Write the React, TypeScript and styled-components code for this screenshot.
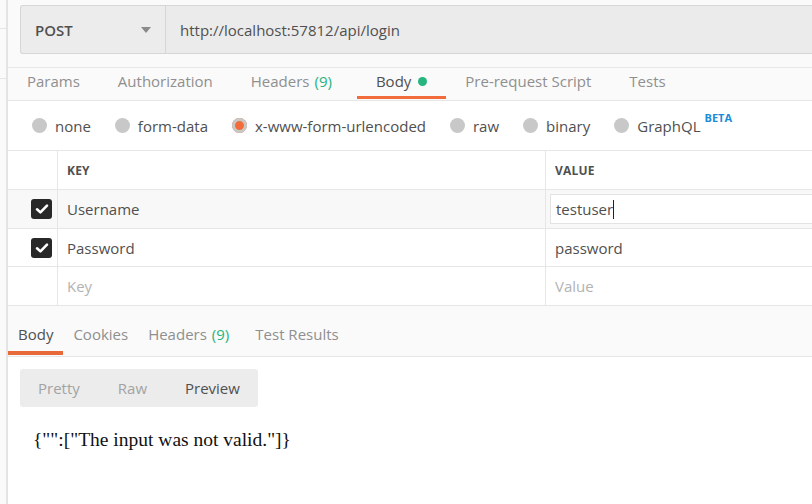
import styled, { createGlobalStyle } from 'styled-components';

const GlobalStyle = createGlobalStyle`
	html, body {
		margin: 0;
		padding: 0;
		background: #fff;
	}
	body {
		font-family: 'Open Sans', 'Liberation Sans', sans-serif;
		color: #505050;
	}
	* {
		box-sizing: border-box;
	}
`;

const requestTabs = [
	{ label: 'Params' },
	{ label: 'Authorization' },
	{ label: 'Headers', count: 9 },
	{ label: 'Body', active: true, dot: true },
	{ label: 'Pre-request Script' },
	{ label: 'Tests' },
];

const bodyModes = [
	{ label: 'none' },
	{ label: 'form-data' },
	{ label: 'x-www-form-urlencoded', checked: true },
	{ label: 'raw' },
	{ label: 'binary' },
	{ label: 'GraphQL', beta: true },
];

const params = [
	{ key: 'Username', value: 'testuser', editing: true },
	{ key: 'Password', value: 'password', short: true },
];

const responseTabs = [
	{ label: 'Body', active: true },
	{ label: 'Cookies' },
	{ label: 'Headers', count: 9 },
	{ label: 'Test Results' },
];

const CheckIcon = () => (
	<svg width="14" height="12" viewBox="0 0 14 12">
		<path d="M2 6.3 L5.4 9.4 L12 2.6" fill="none" stroke="#fff" strokeWidth="2.6" strokeLinecap="round" strokeLinejoin="round" />
	</svg>
);

export default function App() {
	return (
		<>
			<GlobalStyle />
			<Page>
				<Sidebar>
					<SideItem />
					<SideItem />
				</Sidebar>
				<Main>
					<UrlBar>
						<MethodSelect>
							<span>POST</span>
							<Caret />
						</MethodSelect>
						<UrlInput>http://localhost:57812/api/login</UrlInput>
					</UrlBar>

					<TabRow>
						{requestTabs.map((t) => (
							<Tab key={t.label} active={t.active}>
								{t.label}
								{t.count !== undefined && <Count>({t.count})</Count>}
								{t.dot && <Dot />}
							</Tab>
						))}
					</TabRow>

					<ModeRow>
						{bodyModes.map((m) => (
							<Mode key={m.label}>
								<Radio checked={m.checked} />
								<span>{m.label}</span>
								{m.beta && <Beta>BETA</Beta>}
							</Mode>
						))}
					</ModeRow>

					<Table>
						<HeadRow>
							<CheckCell />
							<KeyCell><HeadLabel>KEY</HeadLabel></KeyCell>
							<ValueCell><HeadLabel>VALUE</HeadLabel></ValueCell>
						</HeadRow>
						{params.map((p) => (
							<Row key={p.key} hovered={p.editing} short={p.short}>
								<CheckCell>
									<Checkbox><CheckIcon /></Checkbox>
								</CheckCell>
								<KeyCell>{p.key}</KeyCell>
								<ValueCell>
									{p.editing ? (
										<EditBox>{p.value}<Cursor /></EditBox>
									) : (
										p.value
									)}
								</ValueCell>
							</Row>
						))}
						<Row>
							<CheckCell />
							<KeyCell><Placeholder>Key</Placeholder></KeyCell>
							<ValueCell><Placeholder>Value</Placeholder></ValueCell>
						</Row>
					</Table>

					<ResponseTabs>
						{responseTabs.map((t) => (
							<ResponseTab key={t.label} active={t.active}>
								{t.label}
								{t.count !== undefined && <Count>({t.count})</Count>}
							</ResponseTab>
						))}
					</ResponseTabs>

					<ResponseBody>
						<ViewToggle>
							<ViewOption>Pretty</ViewOption>
							<ViewOption>Raw</ViewOption>
							<ViewOption active>Preview</ViewOption>
						</ViewToggle>
						<Preview>{'{"":["The input was not valid."]}'}</Preview>
					</ResponseBody>
				</Main>
			</Page>
		</>
	);
}

const Page = styled.div`
	display: flex;
	width: 812px;
	height: 504px;
	overflow: hidden;
`;

const Sidebar = styled.div`
	width: 8px;
	flex-shrink: 0;
	background: #fafafa;
	border-right: 2px solid #e4e4e4;
`;

const SideItem = styled.div`
	height: 29px;
	border-bottom: 1px solid #e6e6e6;
	& + & {
		height: 50px;
	}
`;

const Main = styled.div`
	flex: 1;
	min-width: 0;
	display: flex;
	flex-direction: column;
`;

const UrlBar = styled.div`
	display: flex;
	height: 67px;
	padding: 5px 0 13px 12px;
	background: #fafafa;

	& > * {
		height: 49px;
	}
`;

const MethodSelect = styled.div`
	width: 145px;
	display: flex;
	align-items: center;
	justify-content: space-between;
	padding: 0 14px 0 14px;
	background: #ececec;
	border: 1px solid #d6d6d6;
	border-right: none;
	border-radius: 3px 0 0 3px;
	font-size: 15px;
	font-weight: 600;
	color: #505050;
`;

const Caret = styled.span`
	width: 0;
	height: 0;
	border-left: 5px solid transparent;
	border-right: 5px solid transparent;
	border-top: 6px solid #8a8a8a;
`;

const UrlInput = styled.div`
	flex: 1;
	display: flex;
	align-items: center;
	padding-left: 14px;
	background: #ebebeb;
	border: 1px solid #d6d6d6;
	border-right: none;
	font-size: 15px;
	color: #505050;
`;

const TabRow = styled.div`
	display: flex;
	height: 34px;
	background: #fafafa;
	border-top: 1px solid #e8e8e8;
	border-bottom: 1px solid #e6e6e6;
`;

const Tab = styled.div<{ active?: boolean }>`
	display: flex;
	align-items: center;
	padding: 0 19px 5px;
	margin-bottom: 1px;
	font-size: 15px;
	color: ${({ active }) => (active ? '#505050' : '#8f8f8f')};
	box-shadow: ${({ active }) => (active ? 'inset 0 -3px 0 #f26b3a' : 'none')};
`;

const Count = styled.span`
	color: #26b47f;
	margin-left: 5px;
	margin-right: 6px;
`;

const Dot = styled.span`
	width: 9px;
	height: 9px;
	border-radius: 50%;
	background: #26b47f;
	margin-left: 7px;
`;

const ModeRow = styled.div`
	display: flex;
	align-items: center;
	height: 50px;
	padding-left: 24px;
	border-bottom: 1px solid #e6e6e6;
	background: #fff;
`;

const Mode = styled.div`
	display: flex;
	align-items: center;
	margin-right: 24px;
	font-size: 15px;
	color: #505050;
`;

const Radio = styled.span<{ checked?: boolean }>`
	width: 15px;
	height: 15px;
	border-radius: 50%;
	background: ${({ checked }) => (checked ? '#f26b3a' : '#c8c8c8')};
	box-shadow: ${({ checked }) => (checked ? 'inset 0 0 0 3px #c8c8c8' : 'none')};
	margin-right: 8px;
`;

const Beta = styled.span`
	font-size: 11px;
	font-weight: 700;
	color: #1a8cd8;
	margin-left: 4px;
	align-self: flex-start;
	margin-top: -6px;
`;

const Table = styled.div`
	display: flex;
	flex-direction: column;
	border-bottom: 1px solid #e6e6e6;
`;

const Row = styled.div<{ hovered?: boolean; short?: boolean }>`
	display: flex;
	height: ${({ short }) => (short ? '38px' : '39px')};
	border-top: 1px solid #e6e6e6;
	background: ${({ hovered }) => (hovered ? '#f8f8f8' : '#fff')};
	font-size: 15px;
	color: #505050;
`;

const HeadRow = styled(Row)`
	height: 38px;
	border-top: none;
`;

const CheckCell = styled.div`
	width: 49px;
	flex-shrink: 0;
	display: flex;
	align-items: center;
	padding-left: 23px;
`;

const KeyCell = styled.div`
	width: 488px;
	flex-shrink: 0;
	display: flex;
	align-items: center;
	padding-left: 9px;
	border-left: 1px solid #e6e6e6;
`;

const ValueCell = styled.div`
	flex: 1;
	display: flex;
	align-items: center;
	padding-left: 9px;
	border-left: 1px solid #e6e6e6;
`;

const HeadLabel = styled.span`
	font-size: 12px;
	font-weight: 700;
	color: #505050;
	letter-spacing: 0.2px;
`;

const Checkbox = styled.span`
	width: 21px;
	height: 20px;
	border-radius: 3px;
	background: #282828;
	display: flex;
	align-items: center;
	justify-content: center;
`;

const EditBox = styled.div`
	flex: 1;
	height: 30px;
	margin-left: -5px;
	padding-left: 5px;
	display: flex;
	align-items: center;
	background: #fff;
	border: 1px solid #e3e3e3;
	border-right: none;
`;

const Cursor = styled.span`
	width: 1px;
	height: 19px;
	background: #222;
`;

const Placeholder = styled.span`
	color: #b3b3b3;
`;

const ResponseTabs = styled.div`
	display: flex;
	height: 51px;
	background: #fafafa;
	border-bottom: 1px solid #e6e6e6;
`;

const ResponseTab = styled.div<{ active?: boolean }>`
	display: flex;
	align-items: flex-end;
	padding: 0 10px 11px;
	margin-bottom: 1px;
	font-size: 15px;
	color: ${({ active }) => (active ? '#505050' : '#8f8f8f')};
	box-shadow: ${({ active }) => (active ? 'inset 0 -4px 0 #e8693a' : 'none')};
`;

const ResponseBody = styled.div`
	flex: 1;
	padding: 12px 12px;
	background: #fff;
`;

const ViewToggle = styled.div`
	display: inline-flex;
	align-items: center;
	height: 38px;
	width: 238px;
	background: #ececec;
	border-radius: 3px;
	padding-left: 18px;
`;

const ViewOption = styled.span<{ active?: boolean }>`
	font-size: 15px;
	color: ${({ active }) => (active ? '#505050' : '#a3a3a3')};
	margin-right: 38px;
	&:last-child {
		margin-right: 0;
	}
`;

const Preview = styled.div`
	margin-top: 22px;
	padding-left: 13px;
	font-family: 'Liberation Serif', 'Times New Roman', serif;
	font-size: 19.5px;
	color: #111;
`;
